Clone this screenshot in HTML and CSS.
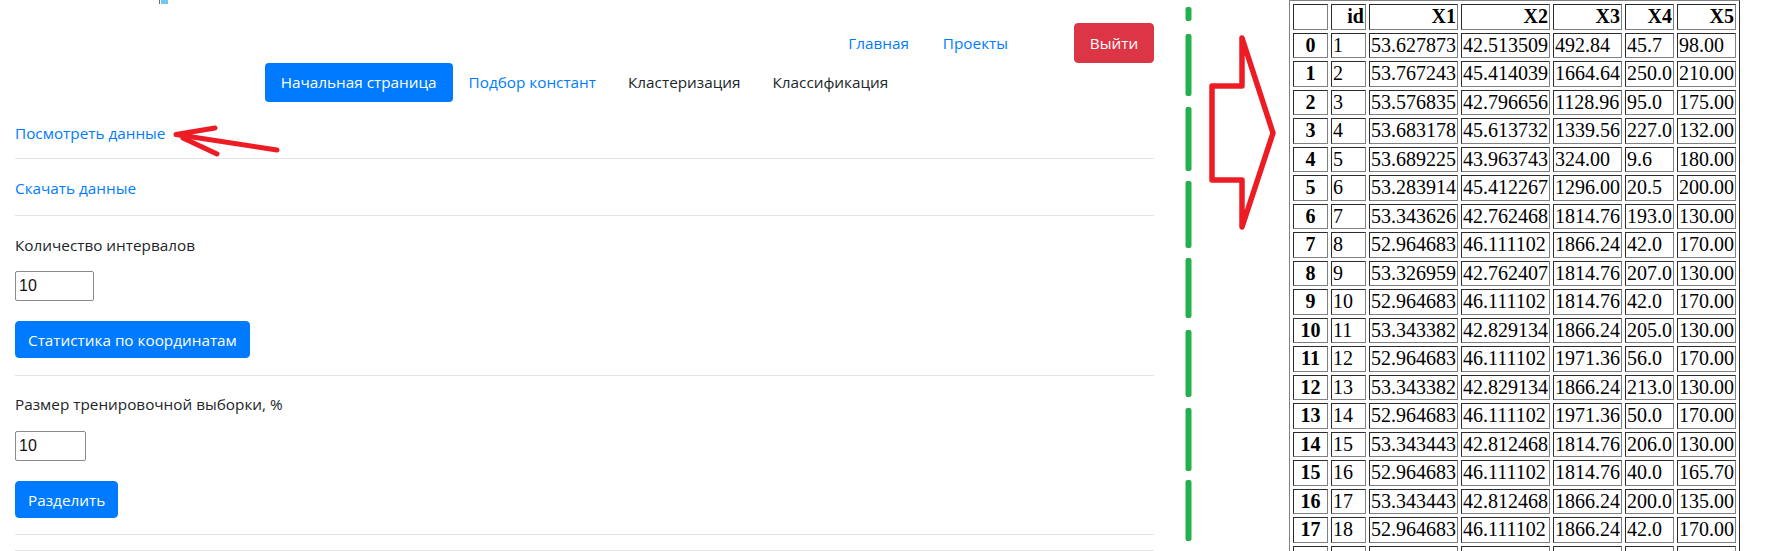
FILE: index.html
```html
<!DOCTYPE html>
<html lang="ru">
<head>
<meta charset="utf-8">
<title>Начальная страница</title>
<link rel="stylesheet" href="styles.css">
</head>
<body>
<div class="page">
  <main class="panel">
    <div class="strip"><span class="strip-line"></span><span class="strip-box"></span></div>
    <nav class="topnav">
      <a class="topnav-link" href="#">Главная</a>
      <a class="topnav-link topnav-link-last" href="#">Проекты</a>
      <button class="btn btn-danger btn-logout" type="button">Выйти</button>
    </nav>
    <ul class="tabs">
      <li><a class="tab tab-active" href="#">Начальная страница</a></li>
      <li><a class="tab tab-blue" href="#">Подбор констант</a></li>
      <li><a class="tab" href="#">Кластеризация</a></li>
      <li><a class="tab" href="#">Классификация</a></li>
    </ul>

    <div class="link-row link-row-first">
      <a class="data-link" href="#">Посмотреть данные</a>
      <svg class="hand-arrow" width="112" height="36" viewBox="0 0 112 36">
        <polyline points="43,4 4,10.5 105,26" fill="none" stroke="#ed1c24" stroke-width="5" stroke-linecap="round" stroke-linejoin="round"/>
        <line x1="11" y1="14" x2="45" y2="30" stroke="#ed1c24" stroke-width="5" stroke-linecap="round"/>
      </svg>
    </div>
    <hr class="sep sep-a">
    <div class="link-row link-row-second">
      <a class="data-link" href="#">Скачать данные</a>
    </div>
    <hr class="sep sep-b">

    <div class="form-block form-block-first">
      <p class="label">Количество интервалов</p>
      <input class="num num-wide" type="text" value="10">
      <button class="btn btn-primary" type="button">Статистика по координатам</button>
    </div>
    <hr class="sep sep-c">

    <div class="form-block form-block-second">
      <p class="label">Размер тренировочной выборки, %</p>
      <input class="num num-narrow" type="text" value="10">
      <button class="btn btn-primary" type="button">Разделить</button>
    </div>
    <hr class="sep sep-d">
    <hr class="sep sep-e">
  </main>

  <svg class="divider" width="120" height="551" viewBox="0 0 120 551">
    <g fill="#22b14c">
      <rect x="16.5" y="7" width="6" height="14" rx="2"/>
      <rect x="16.5" y="34" width="6" height="62" rx="2"/>
      <rect x="16.5" y="107" width="6" height="64" rx="2"/>
      <rect x="16.5" y="181" width="6" height="67" rx="2"/>
      <rect x="16.5" y="258" width="6" height="60" rx="2"/>
      <rect x="16.5" y="330" width="6" height="67" rx="2"/>
      <rect x="16.5" y="408" width="6" height="63" rx="2"/>
      <rect x="16.5" y="480" width="6" height="61" rx="2"/>
    </g>
    <polygon points="43,86 73,86 73,38 104,133 73,227 73,180 43,180" fill="none" stroke="#ed1c24" stroke-width="5.5" stroke-linejoin="round"/>
  </svg>

  <table class="df">
    <thead>
      <tr><th class="w-idx"></th><th class="w-idx">id</th><th>X1</th><th>X2</th><th>X3</th><th>X4</th><th>X5</th></tr>
    </thead>
    <tbody>
      <tr><th>0</th><td>1</td><td>53.627873</td><td>42.513509</td><td>492.84</td><td>45.7</td><td>98.00</td></tr>
      <tr><th>1</th><td>2</td><td>53.767243</td><td>45.414039</td><td>1664.64</td><td>250.0</td><td>210.00</td></tr>
      <tr><th>2</th><td>3</td><td>53.576835</td><td>42.796656</td><td>1128.96</td><td>95.0</td><td>175.00</td></tr>
      <tr><th>3</th><td>4</td><td>53.683178</td><td>45.613732</td><td>1339.56</td><td>227.0</td><td>132.00</td></tr>
      <tr><th>4</th><td>5</td><td>53.689225</td><td>43.963743</td><td>324.00</td><td>9.6</td><td>180.00</td></tr>
      <tr><th>5</th><td>6</td><td>53.283914</td><td>45.412267</td><td>1296.00</td><td>20.5</td><td>200.00</td></tr>
      <tr><th>6</th><td>7</td><td>53.343626</td><td>42.762468</td><td>1814.76</td><td>193.0</td><td>130.00</td></tr>
      <tr><th>7</th><td>8</td><td>52.964683</td><td>46.111102</td><td>1866.24</td><td>42.0</td><td>170.00</td></tr>
      <tr><th>8</th><td>9</td><td>53.326959</td><td>42.762407</td><td>1814.76</td><td>207.0</td><td>130.00</td></tr>
      <tr><th>9</th><td>10</td><td>52.964683</td><td>46.111102</td><td>1814.76</td><td>42.0</td><td>170.00</td></tr>
      <tr><th>10</th><td>11</td><td>53.343382</td><td>42.829134</td><td>1866.24</td><td>205.0</td><td>130.00</td></tr>
      <tr><th>11</th><td>12</td><td>52.964683</td><td>46.111102</td><td>1971.36</td><td>56.0</td><td>170.00</td></tr>
      <tr><th>12</th><td>13</td><td>53.343382</td><td>42.829134</td><td>1866.24</td><td>213.0</td><td>130.00</td></tr>
      <tr><th>13</th><td>14</td><td>52.964683</td><td>46.111102</td><td>1971.36</td><td>50.0</td><td>170.00</td></tr>
      <tr><th>14</th><td>15</td><td>53.343443</td><td>42.812468</td><td>1814.76</td><td>206.0</td><td>130.00</td></tr>
      <tr><th>15</th><td>16</td><td>52.964683</td><td>46.111102</td><td>1814.76</td><td>40.0</td><td>165.70</td></tr>
      <tr><th>16</th><td>17</td><td>53.343443</td><td>42.812468</td><td>1866.24</td><td>200.0</td><td>135.00</td></tr>
      <tr><th>17</th><td>18</td><td>52.964683</td><td>46.111102</td><td>1866.24</td><td>42.0</td><td>170.00</td></tr>
      <tr class="row-cut" aria-hidden="true"><th>&nbsp;</th><td>&nbsp;</td><td>&nbsp;</td><td>&nbsp;</td><td>&nbsp;</td><td>&nbsp;</td><td>&nbsp;</td></tr>
    </tbody>
  </table>
</div>
</body>
</html>
```

FILE: styles.css
```css
html, body {
  margin: 0;
  padding: 0;
  height: 100%;
  overflow: hidden;
  background: #fff;
}

body {
  font-family: "Open Sans", "Noto Sans", sans-serif;
  font-size: 15.3px;
  line-height: 24px;
  color: #212529;
}

.page {
  display: flex;
  align-items: flex-start;
  width: 1782px;
  height: 551px;
  overflow: hidden;
}

/* ---------- left panel ---------- */
.panel {
  box-sizing: border-box;
  flex: none;
  width: 1169px;
  padding: 0 15px;
}

.strip {
  display: flex;
  height: 4px;
  padding-left: 144px;
}

.strip-line {
  width: 1px;
  background: #6b6b6b;
}

.strip-box {
  width: 7px;
  margin-left: 1px;
  background: #74c7ee;
}

.topnav {
  display: flex;
  justify-content: flex-end;
  align-items: center;
  height: 40px;
  margin-top: 19px;
}

.topnav-link {
  color: #007bff;
  text-decoration: none;
  margin-right: 34px;
}

.topnav-link-last {
  margin-right: 66px;
}

.btn {
  box-sizing: border-box;
  font: inherit;
  line-height: 24px;
  height: 37px;
  padding: 0 12px;
  border: 1px solid transparent;
  border-radius: 4px;
  color: #fff;
  cursor: pointer;
  display: block;
}

.btn-danger {
  background: #dc3545;
  border-color: #dc3545;
}

.btn-primary {
  background: #007bff;
  border-color: #007bff;
}

.btn-logout {
  width: 80px;
  height: 40px;
  padding: 0;
}

.tabs {
  list-style: none;
  margin: 0;
  padding: 0;
  display: flex;
  justify-content: center;
  height: 39px;
}

.tab {
  display: block;
  padding: 0 16px;
  line-height: 39px;
  color: #212529;
  text-decoration: none;
  border-radius: 4px;
}

.tab-active {
  background: #007bff;
  color: #fff;
}

.tab-blue {
  color: #007bff;
}

.link-row {
  position: relative;
  height: 24px;
}

.link-row-first {
  margin-top: 19px;
}

.link-row-second {
  margin-top: 17px;
}

.data-link {
  color: #007bff;
  text-decoration: none;
}

.hand-arrow {
  position: absolute;
  left: 157px;
  top: 3px;
}

.sep {
  display: block;
  height: 0;
  margin: 0;
  border: 0;
  border-top: 1px solid #e4e4e4;
}

.sep-a { margin-top: 13px; }
.sep-b { margin-top: 15px; }
.sep-c { margin-top: 17px; }
.sep-d { margin-top: 16px; }
.sep-e { margin-top: 15px; }

.form-block-first { margin-top: 17px; }
.form-block-second { margin-top: 16px; }

.label {
  margin: 0;
  height: 24px;
}

.num {
  box-sizing: border-box;
  display: block;
  height: 30px;
  margin-top: 14px;
  padding: 0 3px;
  border: 1px solid #8a8a8a;
  border-radius: 2px;
  font-family: "Liberation Sans", Arial, sans-serif;
  font-size: 16px;
  color: #111;
  background: #fff;
}

.form-block-second .num {
  margin-top: 15px;
}

.num-wide { width: 79px; }
.num-narrow { width: 71px; }

.form-block .btn {
  margin-top: 20px;
}

/* ---------- divider with annotations ---------- */
.divider {
  flex: none;
  display: block;
}

/* ---------- data table ---------- */
.df {
  flex: none;
  border-collapse: separate;
  border-spacing: 3px;
  border: 1px outset #808080;
  font-family: "Liberation Serif", "Times New Roman", serif;
  font-size: 20px;
  line-height: 21.5px;
  color: #000;
}

.df th,
.df td {
  border: 1px inset #808080;
  padding: 1px;
  vertical-align: middle;
  white-space: nowrap;
}

.df thead th {
  text-align: right;
}

.df tbody th {
  text-align: center;
}

.df td {
  text-align: left;
}

.df .w-idx {
  width: 31px;
}
```
